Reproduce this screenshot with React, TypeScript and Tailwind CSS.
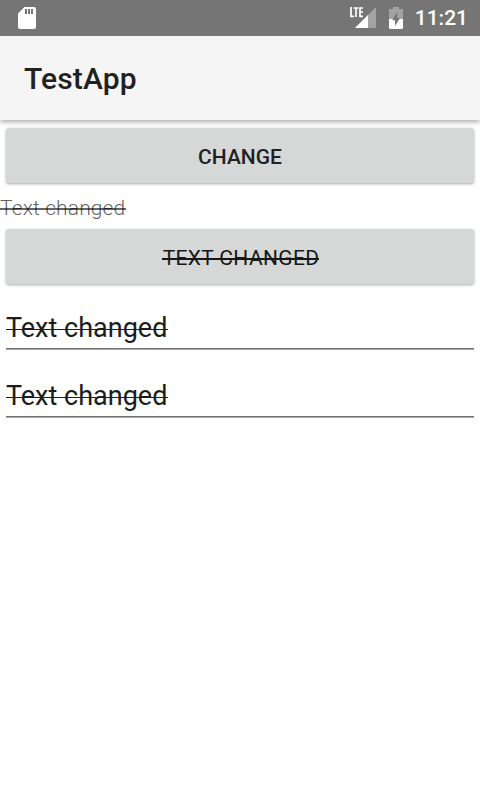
const buttonShadow = "shadow-[0_1px_3px_rgba(0,0,0,0.35)]";

function EditField({ className }: { className: string }) {
  return (
    <div className={`mx-1.5 h-10 shrink-0 text-[27px] leading-[36px] text-[#1c1c1c] ${className}`}>
      <div className="h-[38px]">
        <span className="relative inline-block">
          Text changed
          <span className="absolute top-[19px] left-0 h-px w-[162px] bg-[#1c1c1c]" />
        </span>
      </div>
      <div className="h-px bg-[#737373]" />
      <div className="h-px bg-[#a8a8a8]" />
    </div>
  );
}

export default function App() {
  return (
    <div className="flex h-[800px] w-[480px] flex-col overflow-hidden bg-white font-['Roboto',sans-serif]">
      <div className="z-20 flex h-9 shrink-0 items-center bg-[#757575] text-white">
        <svg className="ml-[18px]" width="18" height="22" viewBox="0 0 18 22">
          <path fill="#fff" fillRule="evenodd" d="M6.5 0H16Q18 0 18 2V20Q18 22 16 22H2Q0 22 0 20V6.5ZM7 2V7H9V2ZM10 2V7H12V2ZM13 2V7H15V2Z" />
        </svg>
        <svg className="ml-auto" width="27" height="22" viewBox="0 0 27 22">
          <path fill="#a3a3a3" d="M26 0V21H5Z" />
          <path fill="#757575" d="M0 0H14V11H0Z" />
          <path fill="#fff" d="M18 8V21H5Z" />
          <path fill="none" stroke="#fff" strokeWidth="1.7" d="M1 0V9.3H4M3.5 1H8.5M6 1V10M13 1H10V9.3H13M10 5H13" />
        </svg>
        <svg className="ml-3" width="14" height="22" viewBox="0 0 14 22">
          <path fill="#a3a3a3" d="M4 0H10V2H13Q14 2 14 3V12H0V3Q0 2 1 2H4Z" />
          <path fill="#fff" d="M0 12H14V21Q14 22 13 22H1Q0 22 0 21Z" />
          <path fill="#757575" d="M8.2 5L3.2 13.2H6V19L11 11H8.2Z" />
        </svg>
        <span className="mr-3 ml-3 pt-[2px] text-[21px] font-medium">11:21</span>
      </div>
      <div className="z-10 flex h-[84px] shrink-0 items-center bg-[#f5f5f5] pl-6 text-[30px] font-medium tracking-[0.15px] text-[#212121] shadow-[0_2px_5px_rgba(0,0,0,0.33)]">TestApp</div>
      <button className={`mx-1.5 mt-2 h-[55px] shrink-0 rounded-[3px] bg-[#d6d7d7] pt-[5px] text-[21px] font-medium text-[#212121] ${buttonShadow}`}>CHANGE</button>
      <div className="mt-[11px] h-7 shrink-0 text-[21px] leading-[28px] text-black/65">
        <span className="relative inline-block font-light tracking-[0.13px]">
          Text changed
          <span className="absolute top-[14px] left-0 h-[2px] w-[126px] bg-black/60" />
        </span>
      </div>
      <button className={`mx-1.5 mt-[7px] h-[55px] shrink-0 rounded-[3px] bg-[#d6d7d7] pt-[5px] text-[21px] text-[#161818] ${buttonShadow}`}>
        <span className="relative left-px inline-block tracking-[0.35px]">
          TEXT CHANGED
          <span className="absolute top-[15px] -left-px h-[2px] w-[157px] bg-[#161818]" />
        </span>
      </button>
      <EditField className="mt-[26px]" />
      <EditField className="mt-7" />
    </div>
  );
}
